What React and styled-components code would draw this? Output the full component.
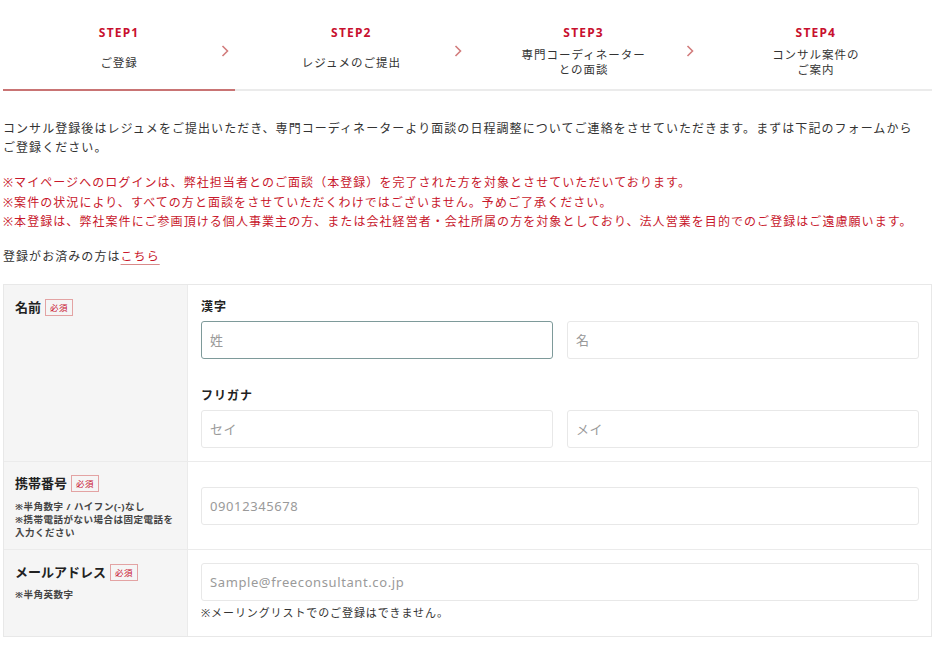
import React from "react";
import styled, { createGlobalStyle } from "styled-components";

const GlobalStyle = createGlobalStyle`
    body {
        margin: 0;
        background: #fff;
        font-family: "Noto Sans", "Noto Sans CJK JP", sans-serif;
        color: #333;
    }
`;

const Page = styled.div`
    width: 929px;
    padding: 0 8px 0 3px;
`;

const StepBar = styled.div`
    display: grid;
    grid-template-columns: repeat(4, 1fr);
`;

const Step = styled.div`
    position: relative;
    height: 91px;
    border-bottom: 2px solid ${(p) => (p.$active ? "#c97474" : "#ebebeb")};
    display: flex;
    flex-direction: column;
    align-items: center;
    padding-top: 26px;
    box-sizing: border-box;
`;

const StepNum = styled.div`
    font-size: 12px;
    line-height: 14px;
    font-weight: 700;
    letter-spacing: 1.2px;
    color: #c8102e;
`;

const StepLabel = styled.div`
    height: 32px;
    margin-top: 6px;
    display: flex;
    align-items: center;
    text-align: center;
    font-size: 11.5px;
    line-height: 15px;
    letter-spacing: 1px;
    color: #333;
`;

const Chevron = styled.svg`
    position: absolute;
    right: 6px;
    top: 45px;
    width: 8px;
    height: 12px;
`;

const Text = styled.p`
    margin: 0;
    padding-right: 8px;
    font-size: 12px;
    line-height: 19.2px;
    letter-spacing: 1.06px;
    color: ${(p) => (p.$red ? "#c8182c" : "#333")};
`;

const Intro = styled(Text)`
    margin-top: 28px;
`;

const Notes = styled(Text)`
    margin-top: 16px;
`;

const LoginLine = styled(Text)`
    margin-top: 16px;
`;

const Link = styled.a`
    color: #c8182c;
    text-decoration: underline;
    text-decoration-color: #d98a8a;
    text-underline-offset: 3px;
`;

const Table = styled.div`
    margin-top: 18px;
    border: 1px solid #e8e8e8;
`;

const Row = styled.div`
    display: grid;
    grid-template-columns: 184px 1fr;
    & + & {
        border-top: 1px solid #ebebeb;
    }
`;

const Head = styled.div`
    background: #f5f5f5;
    border-right: 1px solid #ebebeb;
    padding: ${(p) => p.$pad || "13px 10px 10px 11px"};
`;

const HeadTitle = styled.div`
    display: flex;
    align-items: center;
    font-size: 13px;
    line-height: 18px;
    font-weight: 700;
    color: #222;
`;

const Badge = styled.span`
    margin-left: 4px;
    border: 1px solid #e3a3a3;
    color: #c8102e;
    font-size: 8.5px;
    line-height: 15px;
    font-weight: 400;
    padding: 0 4px;
    letter-spacing: 0.5px;
`;

const HeadNote = styled.div`
    margin-top: ${(p) => p.$mt || "8px"};
    font-size: 9.5px;
    line-height: 13px;
    font-weight: 700;
    letter-spacing: 0.5px;
    color: #444;
`;

const Body = styled.div`
    padding: ${(p) => p.$pad || "13px 12px 13px 13px"};
    display: flex;
    flex-direction: column;
    justify-content: ${(p) => (p.$center ? "center" : "flex-start")};
`;

const FieldLabel = styled.div`
    margin-top: ${(p) => p.$mt || "0"};
    margin-bottom: 5px;
    font-size: 12px;
    line-height: 18px;
    font-weight: 700;
    letter-spacing: 1px;
    color: #222;
`;

const Pair = styled.div`
    display: grid;
    grid-template-columns: 1fr 1fr;
    gap: 14px;
`;

const Input = styled.input`
    box-sizing: border-box;
    width: 100%;
    height: 38px;
    padding: 0 8px;
    border: 1px solid ${(p) => (p.$focused ? "#7e9a9a" : "#e8e8e8")};
    border-radius: 3px;
    outline: none;
    background: #fff;
    font-family: "Noto Sans", "Noto Sans CJK JP", sans-serif;
    font-size: 13px;
    letter-spacing: 0.6px;
    color: #333;
    &::placeholder {
        color: #9a9a9a;
    }
`;

const InputNote = styled.div`
    margin-top: 4px;
    font-size: 11px;
    line-height: 16px;
    letter-spacing: 0.9px;
    color: #333;
`;

const steps = [
    { num: "STEP1", label: ["ご登録"], active: true },
    { num: "STEP2", label: ["レジュメのご提出"] },
    { num: "STEP3", label: ["専門コーディネーター", "との面談"] },
    { num: "STEP4", label: ["コンサル案件の", "ご案内"] },
];

export default function App() {
    return (
        <Page>
            <GlobalStyle />
            <StepBar>
                {steps.map((s, i) => (
                    <Step key={s.num} $active={s.active}>
                        <StepNum>{s.num}</StepNum>
                        <StepLabel>
                            <div>
                                {s.label.map((l, j) => (
                                    <div key={j}>{l}</div>
                                ))}
                            </div>
                        </StepLabel>
                        {i < steps.length - 1 && (
                            <Chevron viewBox="0 0 8 12">
                                <polyline points="1.5,1 6.5,6 1.5,11" fill="none" stroke="#d27c7c" strokeWidth="1.6" />
                            </Chevron>
                        )}
                    </Step>
                ))}
            </StepBar>

            <Intro>
                コンサル登録後はレジュメをご提出いただき、専門コーディネーターより面談の日程調整についてご連絡をさせていただきます。まずは下記のフォームからご登録ください。
            </Intro>
            <Notes $red>
                ※マイページへのログインは、弊社担当者とのご面談（本登録）を完了された方を対象とさせていただいております。
                <br />
                ※案件の状況により、すべての方と面談をさせていただくわけではございません。予めご了承ください。
                <br />
                ※本登録は、弊社案件にご参画頂ける個人事業主の方、または会社経営者・会社所属の方を対象としており、法人営業を目的でのご登録はご遠慮願います。
            </Notes>
            <LoginLine>
                登録がお済みの方は<Link href="#">こちら</Link>
            </LoginLine>

            <Table>
                <Row>
                    <Head>
                        <HeadTitle>
                            名前<Badge>必須</Badge>
                        </HeadTitle>
                    </Head>
                    <Body>
                        <FieldLabel>漢字</FieldLabel>
                        <Pair>
                            <Input placeholder="姓" $focused autoFocus />
                            <Input placeholder="名" />
                        </Pair>
                        <FieldLabel $mt="28px">フリガナ</FieldLabel>
                        <Pair>
                            <Input placeholder="セイ" />
                            <Input placeholder="メイ" />
                        </Pair>
                    </Body>
                </Row>
                <Row>
                    <Head $pad="12px 10px 10px 11px">
                        <HeadTitle>
                            携帯番号<Badge>必須</Badge>
                        </HeadTitle>
                        <HeadNote>
                            ※半角数字 / ハイフン(-)なし
                            <br />
                            ※携帯電話がない場合は固定電話を入力ください
                        </HeadNote>
                    </Head>
                    <Body $center $pad="0 12px 0 13px">
                        <Input placeholder="09012345678" />
                    </Body>
                </Row>
                <Row>
                    <Head>
                        <HeadTitle>
                            メールアドレス<Badge>必須</Badge>
                        </HeadTitle>
                        <HeadNote $mt="7px">※半角英数字</HeadNote>
                    </Head>
                    <Body $pad="13px 12px 15px 13px">
                        <Input placeholder="Sample@freeconsultant.co.jp" />
                        <InputNote>※メーリングリストでのご登録はできません。</InputNote>
                    </Body>
                </Row>
            </Table>
        </Page>
    );
}
